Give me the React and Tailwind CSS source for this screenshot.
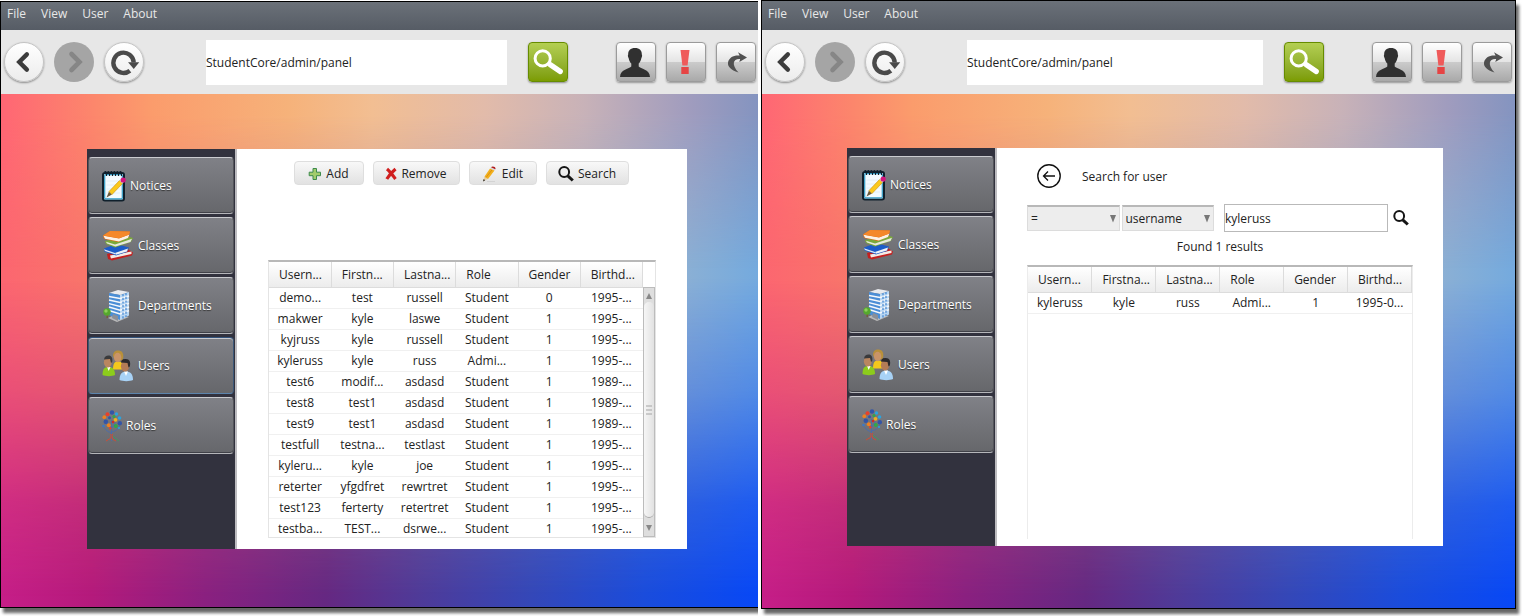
import React from 'react';

const menuItems = ['File', 'View', 'User', 'About'];

const userRows = [
  ['demo...', 'test', 'russell', 'Student', '0', '1995-...'],
  ['makwer', 'kyle', 'laswe', 'Student', '1', '1995-...'],
  ['kyjruss', 'kyle', 'russell', 'Student', '1', '1995-...'],
  ['kyleruss', 'kyle', 'russ', 'Admi...', '1', '1995-...'],
  ['test6', 'modif...', 'asdasd', 'Student', '1', '1989-...'],
  ['test8', 'test1', 'asdasd', 'Student', '1', '1989-...'],
  ['test9', 'test1', 'asdasd', 'Student', '1', '1989-...'],
  ['testfull', 'testna...', 'testlast', 'Student', '1', '1995-...'],
  ['kyleru...', 'kyle', 'joe', 'Student', '1', '1995-...'],
  ['reterter', 'yfgdfret', 'rewrtret', 'Student', '1', '1995-...'],
  ['test123', 'ferterty', 'retertret', 'Student', '1', '1995-...'],
  ['testba...', 'TEST...', 'dsrwe...', 'Student', '1', '1995-...'],
];

/* ---------- toolbar icons ---------- */

const BackIcon = () => (
  <svg width="40" height="40" viewBox="0 0 40 40" aria-hidden="true">
    <path d="M23 12 L15 20 L23 28" fill="none" stroke="#3c3c3c" strokeWidth="4.6" strokeLinecap="round" />
  </svg>
);
const NextIcon = () => (
  <svg width="40" height="40" viewBox="0 0 40 40" aria-hidden="true">
    <path d="M17.500 12 L25.500 20 L17.500 28" fill="none" stroke="#868686" strokeWidth="4.600" strokeLinecap="round" />
  </svg>
);
const ReloadIcon = () => (
  <svg width="40" height="40" viewBox="0 0 40 40" aria-hidden="true">
    <path d="M26.200 29.200 A10.700 10.700 0 1 1 30.200 20.500" fill="none" stroke="#4a4a4a" strokeWidth="4.600" />
    <path d="M24.300 20.200 H36 L30.300 27.300 Z" fill="#4a4a4a" />
  </svg>
);
const GoIcon = () => (
  <svg width="38" height="38" viewBox="1 1 38 38" aria-hidden="true">
    <path d="M22 22.500 L32.300 29.500" stroke="#fff" strokeWidth="5.200" strokeLinecap="round" />
    <circle cx="14.700" cy="16.400" r="7.600" fill="none" stroke="#fff" strokeWidth="3" />
  </svg>
);
const PersonIcon = () => (
  <svg width="38" height="38" viewBox="1 1 38 38" aria-hidden="true">
    <path
      d="M19 6 C23.500 6 26 8.500 25.800 12.500 C26.300 13 26.200 15 25.400 16 C24.800 19 23.800 20.500 22.700 21.500 V24.500 C24.500 27 33.600 27 34 35 H4 C4.400 27 13.500 27 15.300 24.500 V21.500 C14.200 20.500 13.200 19 12.600 16 C11.800 15 11.700 13 12.200 12.500 C12 8.500 14.500 6 19 6 Z"
      fill="#303030"
    />
  </svg>
);
const AlertIcon = () => (
  <svg width="38" height="38" viewBox="1 1 38 38" aria-hidden="true">
    <path d="M14.500 8 H23.500 L21.600 23.500 H16.400 Z" fill="#ef5a5a" />
    <rect x="15.300" y="25" width="7.400" height="7" fill="#e64444" />
  </svg>
);
const ForwardIcon = () => (
  <svg width="38" height="38" viewBox="1 1 38 38" aria-hidden="true">
    <path
      d="M22 10.300 L31 15.500 L23.300 20 L24.200 17 C17.500 16.300 14.800 22 22.500 30.500 C14.500 28 11.600 24.500 12 20.800 C12.600 15.500 18 13 23.600 13.600 Z"
      fill="#505050"
    />
  </svg>
);

/* ---------- sidebar icons ---------- */

const NoticesIcon = () => (
  <svg width="24" height="32" viewBox="0 0 24 32" aria-hidden="true">
    <rect x="1" y="3" width="21" height="27.500" rx="2" fill="#f4fbff" stroke="#10202c" strokeWidth="2" />
    <rect x="2.700" y="4.700" width="17.600" height="24.200" rx="1" fill="none" stroke="#2f9ac4" strokeWidth="1.200" />
    <path d="M4.500 11 H18 M4.500 15 H18 M4.500 19 H18 M4.500 23 H18" stroke="#dfeef5" strokeWidth="0.800" />
    {[4.5, 7.5, 10.5, 13.5, 16.5, 19.5].map((x) => (
      <path key={x} d={`M${x} 6 V3 a1.200 1.200 0 0 0 -2 -1`} fill="none" stroke="#10202c" strokeWidth="1.100" />
    ))}
    <path d="M4.500 27.500 L7 21.500 L10 24.500 Z" fill="#6b5a3c" />
    <path d="M7 21.500 L17.500 10.500 L20.500 13.500 L10 24.500 Z" fill="#fbc91c" stroke="#c98f10" strokeWidth="0.600" />
    <path d="M17.500 10.500 L18.700 9.200 L21.700 12.200 L20.500 13.500 Z" fill="#d8dde0" />
    <circle cx="21.200" cy="10" r="2.600" fill="#d4147c" />
  </svg>
);
const ClassesIcon = () => (
  <svg width="32" height="32" viewBox="0 0 32 32" aria-hidden="true">
    <path d="M5 24 L24 18 L31 22.500 L30 25.500 L10 30.500 L6 29 Z" fill="#c41f1f" />
    <path d="M8 25.500 L29.500 21.500 L29.500 24 L9 28.500 Z" fill="#f3ece6" />
    <path d="M2 18.500 L14 14 L27 17.500 L25 22 L14 25.500 L2.500 21.500 Z" fill="#1c5cc8" />
    <path d="M13 23 L26 18.500 L25 21.500 L14 24.800 Z" fill="#eef2f8" />
    <path d="M2 19.300 L13 23 L13.500 24.500 L3 21 Z" fill="#dfe8f4" />
    <path d="M3 11 L26 6.500 L31 8 L29 12 L13 17.500 L4 14 Z" fill="#7aa83a" />
    <path d="M4 11.800 L13 14.500 L30 8.800 L28.500 12 L13.500 16.600 L5 13.500 Z" fill="#e6e8dc" />
    <path d="M1 5.500 L8 1 L28 1.500 L26.500 7.500 L16 12 L2 9 Z" fill="#e06c10" />
    <path d="M1.500 5.800 L17 8.500 L27.300 4.500 L26 8 L16.800 11.600 L3 8.700 Z" fill="#fbf1e6" />
    <path d="M8 1 L28 1.500 L27 4.800 L17 8.300 L1 5.500 Z" fill="#f4882a" />
  </svg>
);
const DepartmentsIcon = () => (
  <svg width="32" height="32" viewBox="0 0 32 32" aria-hidden="true">
    <path d="M6 28 L14 24 L27 27 L15 32 Z" fill="#b9b9b9" />
    <path d="M7 3 L16 0 L27 2 L18 5 Z" fill="#e8eaee" />
    <path d="M7 3 L18 5 V30 L7 25 Z" fill="#4b8ed6" />
    <path d="M18 5 L27 2 V25.500 L18 30 Z" fill="#b8d6f2" />
    <path d="M7 6.500 L18 8.500 L27 6 M7 10 L18 12.500 L27 9.700 M7 13.600 L18 16.500 L27 13.300 M7 17 L18 20.200 L27 17 M7 20.500 L18 24 L27 20.700" fill="none" stroke="#f6f8fb" strokeWidth="1.400" />
    <path d="M21 4 V28.500 M24 3 V27" stroke="#3f84d0" strokeWidth="1.200" strokeDasharray="2.200 1.500" />
    <path d="M11 24 L16 26 V31 L10 28 Z" fill="#8a8f98" />
    <rect x="4.500" y="23" width="1.400" height="5" fill="#7a5a34" />
    <circle cx="5" cy="22" r="3.700" fill="#55a82e" />
    <circle cx="4" cy="21" r="1.700" fill="#8fd05a" />
  </svg>
);
const UsersIcon = () => (
  <svg width="32" height="32" viewBox="0 0 32 32" aria-hidden="true">
    <path d="M11 19.500 C11 13 13 11.500 16 11.500 C19.500 11.500 21.500 13 21.500 19.500 Z" fill="#f3c81c" />
    <path d="M11 6 C11 2 13 0.500 16 0.500 C19.500 0.500 21.500 2.500 21.300 7 L20.500 10.500 H18 L12 8 Z" fill="#b8903a" />
    <ellipse cx="15.600" cy="7.500" rx="3.700" ry="4.700" fill="#c99468" />
    <path d="M0.500 25 C0.500 18.500 3 17 6.500 17 C10 17 13 18.500 13 25 C10 26.500 3.500 26.500 0.500 25 Z" fill="#8ccc1c" />
    <path d="M5 17 L6.700 21 L8.500 17 Z" fill="#fff" />
    <ellipse cx="5.800" cy="12.200" rx="3.900" ry="5.200" fill="#b98660" />
    <path d="M2 9.500 C2.500 6.500 4 5.500 6.500 5.500 C9.500 5.500 11 8 10.200 12 L9 13 L8 9 Z" fill="#3a3a3c" />
    <path d="M17.500 30 C17.500 23.500 20.500 21.500 24 21.500 C28 21.500 31 23.500 31 30 C28 31.500 20.500 31.500 17.500 30 Z" fill="#a8d2f6" />
    <path d="M22 21.500 L24 26 L26 21.500 Z" fill="#fff" />
    <ellipse cx="23" cy="16.200" rx="4.100" ry="5.200" fill="#b47c56" />
    <path d="M19 12.500 C19.500 9.500 21 9 23.800 9 C27.500 9 29 12 27.800 16.500 L26.500 17.500 L25.500 13 Z" fill="#2c2a2c" />
  </svg>
);
const leaves = [
  [10, 2.5, 2.2, '#3355a8'], [5.5, 4.2, 2, '#e8402a'], [14.5, 4, 1.7, '#2aa4e0'], [2.3, 7.2, 1.9, '#f08020'],
  [7.5, 7.8, 1.5, '#3355a8'], [12, 6.4, 1.5, '#30a848'], [17.5, 8, 1.8, '#2aa4e0'], [3.8, 11.8, 2.3, '#3355a8'],
  [13.5, 9.8, 1.9, '#f0b020'], [11, 12, 1.3, '#d02a2a'], [17.8, 13.2, 2.2, '#3355a8'], [6.8, 15.3, 2, '#f08020'],
  [1.5, 16, 1.3, '#3a78c8'], [13.8, 16, 2, '#30a848'], [8.3, 18.2, 1.2, '#e8402a'], [17, 18, 1.1, '#2aa4e0'],
];
const RolesIcon = () => (
  <svg width="20" height="32" viewBox="0 0 20 32" aria-hidden="true">
    <path d="M9.500 31 V10 M9.500 23 C6 22 3.500 20 2 17.500 M9.500 22 C13 21.500 16 19.500 17.500 16 M9.500 18 L5 13 M10 18 L13.500 12" fill="none" stroke="#4a6cae" strokeWidth="0.900" />
    <path d="M10.300 24 V29 L14 31 M9 24 V28 L4 31" fill="none" stroke="#d84a30" strokeWidth="0.900" />
    <path d="M10.500 26 L17 31" stroke="#3aa05a" strokeWidth="0.800" />
    {leaves.map(([x, y, r, c]) => (
      <circle key={`${x}-${y}`} cx={x} cy={y} r={r} fill={c} />
    ))}
  </svg>
);

const sections = [
  { label: 'Notices', Icon: NoticesIcon },
  { label: 'Classes', Icon: ClassesIcon },
  { label: 'Departments', Icon: DepartmentsIcon },
  { label: 'Users', Icon: UsersIcon },
  { label: 'Roles', Icon: RolesIcon },
];

/* ---------- action icons ---------- */

const AddIcon = () => (
  <svg width="14" height="14" viewBox="0 0 14 14" aria-hidden="true">
    <path d="M5 1.500 H8.500 V5.200 H12.500 V8.700 H8.500 V12.500 H5 V8.700 H1.200 V5.200 H5 Z" fill="#a3cc6c" stroke="#3c8a4c" strokeWidth="1" />
  </svg>
);
const RemoveIcon = () => (
  <svg width="12" height="14" viewBox="0 0 12 14" aria-hidden="true">
    <path d="M2 2 C5 4.500 7.500 8 10.500 12 M10.500 2 C7 5 4 8.500 1.800 12" fill="none" stroke="#d01e1e" strokeWidth="3.200" />
  </svg>
);
const EditIcon = () => (
  <svg width="16" height="16" viewBox="0 0 16 16" aria-hidden="true">
    <path d="M1 15.500 L2.500 10.500 L6 12.800 Z" fill="#e8cfa0" />
    <path d="M1 15.500 L1.700 13 L3.200 14.200 Z" fill="#222" />
    <path d="M2.500 10.500 L8 2.500 L12.500 4.500 L6 13 Z" fill="#f2b01c" />
    <path d="M4 11.500 L10.300 3.500" stroke="#d88a10" strokeWidth="0.900" />
    <path d="M8 2.500 L9 1.200 L13.300 3.200 L12.500 4.500 Z" fill="#d8d8d8" />
    <path d="M9 1.200 C10.500 -0.500 14.500 1 13.300 3.200 Z" fill="#b01818" />
    <path d="M5 15.500 H13" stroke="#ccc" strokeWidth="0.700" />
  </svg>
);
const SearchIcon = () => (
  <svg width="16" height="16" viewBox="0 0 16 16" aria-hidden="true">
    <circle cx="6.200" cy="6" r="4.900" fill="none" stroke="#151515" strokeWidth="2" />
    <path d="M9.800 9.800 L14.800 14.500" stroke="#151515" strokeWidth="3" />
  </svg>
);

const actions = [
  { label: 'Add', Icon: AddIcon, width: 'w-[70px]' },
  { label: 'Remove', Icon: RemoveIcon, width: 'w-[87px]' },
  { label: 'Edit', Icon: EditIcon, width: 'w-[68px]' },
  { label: 'Search', Icon: SearchIcon, width: 'w-[83px]' },
];

/* ---------- building blocks ---------- */

function MenuBar({ className }) {
  return (
    <nav className={`flex items-center gap-[15px] bg-linear-to-b from-[#6b7179] to-[#565c65] pl-1.5 text-[#e8e8e8] [text-shadow:1px_1px_1px_#2c3036] ${className}`}>
      {menuItems.map((item) => (
        <button key={item} type="button" className="leading-4">{item}</button>
      ))}
    </nav>
  );
}

const roundButton = 'size-10 rounded-full border border-[#c4c4c4] bg-linear-to-b from-white to-[#ececec] shadow-[0_1px_2px_rgba(0,0,0,0.4)] flex items-center justify-center';
const squareButton = 'size-10 rounded-[4px] border border-[#9b9b9b] bg-[linear-gradient(#ffffff,#e4e4e4_50%,#cbcbcb_51%,#a9a9a9)] shadow-[0_1px_2px_rgba(0,0,0,0.35)] flex items-center justify-center';

function Toolbar({ className }) {
  return (
    <div className={`flex h-16 items-center bg-[#e7e7e7] pl-[3px] ${className}`}>
      <div className="flex gap-2.5">
        <button type="button" aria-label="Back" className={roundButton}><BackIcon /></button>
        <button type="button" aria-label="Forward" className="flex size-10 items-center justify-center rounded-full bg-[#a5a5a5]"><NextIcon /></button>
        <button type="button" aria-label="Reload" className={roundButton}><ReloadIcon /></button>
      </div>
      <input
        type="text"
        aria-label="Address"
        defaultValue="StudentCore/admin/panel"
        className="ml-[62px] h-[45px] min-w-0 flex-1 bg-white text-[#222] outline-none"
      />
      <button
        type="button"
        aria-label="Go"
        className="ml-[21px] flex size-10 items-center justify-center rounded-[4px] border border-[#668c00] bg-linear-to-b from-[#b4cf52] to-[#7c9c00] shadow-[0_1px_2px_rgba(0,0,0,0.4)]"
      >
        <GoIcon />
      </button>
      <div className="ml-12 flex gap-2.5">
        <button type="button" aria-label="Profile" className={squareButton}><PersonIcon /></button>
        <button type="button" aria-label="Alerts" className={squareButton}><AlertIcon /></button>
        <button type="button" aria-label="Log out" className={squareButton}><ForwardIcon /></button>
      </div>
    </div>
  );
}

function Sidebar({ active }) {
  return (
    <aside className="w-[150px] shrink-0 border-r-2 border-[#bdbcc0] bg-[#32323e]">
      <div className="flex flex-col gap-[3px] px-px pt-2">
        {sections.map(({ label, Icon }) => (
          <button
            key={label}
            type="button"
            className={`flex h-[57px] items-center gap-1 rounded-[4px] border bg-linear-to-b from-[#808187] to-[#66676b] pl-[13px] text-white [text-shadow:0_1px_1px_#333] ${
              label === active
                ? 'border-x-[#3c5878] border-t-[#34547c] border-b-[#5c84ac] shadow-[inset_0_1px_0_#c9cace]'
                : 'border-x-[#54555b] border-t-[#cbccd0] border-b-[#b5b6ba] shadow-[inset_0_-1px_0_#404148]'
            }`}
          >
            <Icon />
            {label}
          </button>
        ))}
      </div>
    </aside>
  );
}

function UserTable({ headers, rows }) {
  return (
    <table className="w-full table-fixed border-collapse">
      <thead>
        <tr className="h-[25px] bg-linear-to-b from-white to-[#ececec]">
          {headers.map((h) => (
            <th key={h} scope="col" className="border-r border-b border-[#dcdcdc] p-0 pt-0.5 pl-2.5 text-left leading-4 font-normal whitespace-nowrap">
              {h}
            </th>
          ))}
        </tr>
      </thead>
      <tbody>
        {rows.map((row) => (
          <tr key={row[0]} className="h-[21px] border-b border-[#f0f0f0]">
            {row.map((cell, i) => (
              <td key={i} className="p-0 text-center leading-4 whitespace-nowrap">{cell}</td>
            ))}
          </tr>
        ))}
      </tbody>
    </table>
  );
}

function ScrollBar() {
  return (
    <div aria-hidden="true" className="mt-[25px] flex w-3 shrink-0 flex-col items-center border border-[#bcbcbc] bg-[#dedede]">
      <svg width="8" height="14" viewBox="0 0 8 14"><path d="M4 5 L7 11 H1 Z" fill="#888" /></svg>
      <div className="flex w-full flex-1 items-center justify-center rounded-md border-b border-[#a8a8a8] bg-linear-to-r from-[#f6f6f6] to-[#e2e2e2]">
        <svg width="6" height="10" viewBox="0 0 6 10"><path d="M0 1 H6 M0 5 H6 M0 9 H6" stroke="#a5a5a5" /></svg>
      </div>
      <svg width="8" height="18" viewBox="0 0 8 18"><path d="M4 13 L7 7 H1 Z" fill="#888" /></svg>
    </div>
  );
}

function Desktop({ className, children }) {
  return (
    <div className={`relative flex bg-[linear-gradient(to_right,#c61e88,#b41a7c_12%,#8a2080_27%,#652882_43%,#4f3a98_55%,#3447b8_70%,#1a4cdc_85%,#0848f6)] ${className}`}>
      <div className="absolute inset-0 bg-[linear-gradient(to_right,#fc6670,#f8766a_12%,#c89898_50%,#8cb0d4_90%,#74aade)] [mask-image:linear-gradient(#000_36%,rgba(0,0,0,0.68)_58%,rgba(0,0,0,0.2)_80%,transparent_98%)]" />
      <div className="absolute inset-0 bg-[linear-gradient(to_right,#ff6674,#fc866c_12%,#fb9c6c_20%,#f6b27a_38%,#f2be92_49%,#e2bbaa_64%,#c8b2b8_77%,#a09cbe_91%,#8494c0)] [mask-image:linear-gradient(#000_4%,transparent_34%)]" />
      <div className="relative flex min-w-0 flex-1 bg-white">{children}</div>
    </div>
  );
}

function Dropdown({ label, value }) {
  return (
    <div className="relative flex-1">
      <select
        aria-label={label}
        defaultValue={value}
        className="h-[26px] w-full appearance-none border border-t-2 border-[#dcdcdc] border-t-[#b8b8b8] bg-[#ededed] pl-[3px] outline-none"
      >
        <option>{value}</option>
      </select>
      <svg width="6" height="8" viewBox="0 0 6 8" aria-hidden="true" className="pointer-events-none absolute top-2.5 right-1">
        <path d="M0 0 H6 L3 7.500 Z" fill="#777" />
      </svg>
    </div>
  );
}

function UsersWindow() {
  return (
    <section className="mt-px border-y border-l border-black shadow-[3px_5px_3px_rgba(0,0,0,0.6)] [clip-path:inset(0_0_-10px_0)]">
      <MenuBar className="h-7 pb-1" />
      <Toolbar className="pr-0.5" />
      <Desktop className="pt-[55px] pr-[71px] pb-[58px] pl-[86px]">
        <Sidebar active="Users" />
        <div className="min-w-0 flex-1 pt-3 pb-[11px]">
          <div className="flex justify-center gap-[9px] pr-0.5">
            {actions.map(({ label, Icon, width }) => (
              <button
                key={label}
                type="button"
                className={`flex h-6 items-center justify-center gap-1 rounded-[4px] border border-[#dedede] bg-linear-to-b from-[#f8f8f8] to-[#e2e2e2] pt-0.5 ${width}`}
              >
                <Icon />
                {label}
              </button>
            ))}
          </div>
          <div className="mx-[31px] mt-[75px] flex h-[278px] overflow-hidden border border-t-2 border-[#e4e4e4] border-t-[#b8b8b8]">
            <UserTable headers={['Usern...', 'Firstn...', 'Lastna...', 'Role', 'Gender', 'Birthd...']} rows={userRows} />
            <ScrollBar />
          </div>
        </div>
      </Desktop>
    </section>
  );
}

function SearchWindow() {
  return (
    <section className="border border-black shadow-[3px_5px_3px_rgba(0,0,0,0.6)]">
      <MenuBar className="h-[29px] pb-[3px]" />
      <Toolbar className="pr-[3px]" />
      <Desktop className="pt-[54px] pr-[72px] pb-[62px] pl-[85px]">
        <Sidebar />
        <div className="flex min-w-0 flex-1 flex-col px-[30px] pt-4 pb-[7px]">
          <div className="flex items-center gap-[21px] pl-2.5">
            <button type="button" aria-label="Back to users">
              <svg width="24" height="24" viewBox="0 0 24 24" fill="none" stroke="#111" aria-hidden="true">
                <circle cx="12" cy="12" r="11.200" strokeWidth="1.400" />
                <path d="M18 12 H6.500 M11 7.500 L6.500 12 L11 16.500" strokeWidth="1.300" />
              </svg>
            </button>
            <h2 className="pt-0.5">Search for user</h2>
          </div>
          <div className="mt-4 flex items-center">
            <div className="flex min-w-0 flex-1 gap-0.5">
              <Dropdown label="Comparison" value="=" />
              <Dropdown label="Field" value="username" />
            </div>
            <input
              type="text"
              aria-label="Search value"
              defaultValue="kyleruss"
              className="ml-2.5 h-7 w-[164px] border border-[#b9b9b9] bg-white outline-none"
            />
            <button type="button" aria-label="Search" className="mr-1 ml-[5px]"><SearchIcon /></button>
          </div>
          <p className="mt-1.5 text-center leading-[18px]">Found 1 results</p>
          <div className="mt-[9px] min-h-[274px] flex-1 border-x border-t-2 border-[#ececec] border-t-[#b8b8b8]">
            <UserTable
              headers={['Usern...', 'Firstna...', 'Lastna...', 'Role', 'Gender', 'Birthd...']}
              rows={[['kyleruss', 'kyle', 'russ', 'Admi...', '1', '1995-0...']]}
            />
          </div>
        </div>
      </Desktop>
    </section>
  );
}

export default function App() {
  return (
    <main className="grid grid-cols-[758fr_755fr] items-start gap-[3px] overflow-hidden bg-white pr-1.5 pb-[7px] font-['Open_Sans','Noto_Sans',sans-serif] text-[12px] text-[#222]">
      <UsersWindow />
      <SearchWindow />
    </main>
  );
}
